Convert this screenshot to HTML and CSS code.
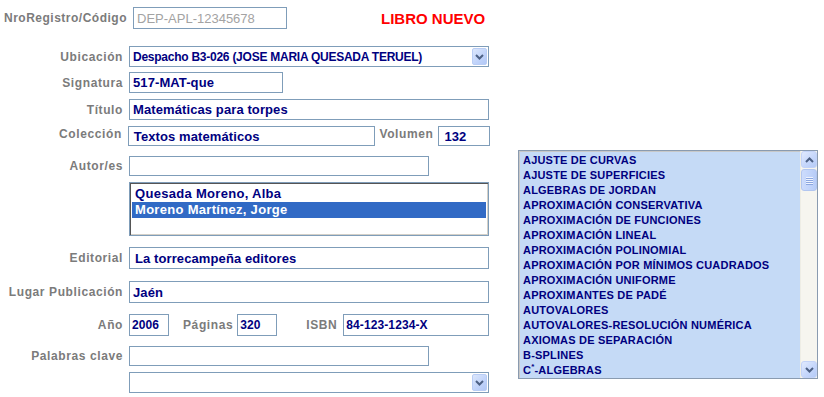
FILE: index.html
```html
<!DOCTYPE html>
<html lang="es">
<head>
<meta charset="utf-8">
<link rel="stylesheet" href="styles.css">
</head>
<body>
<div class="page">
  <div class="form">
    <div class="row-top">
      <span class="lbl-top">NroRegistro/Código</span>
      <div class="field code">DEP-APL-12345678</div>
      <span class="nuevo">LIBRO NUEVO</span>
    </div>

    <div class="row r-ubic">
      <span class="lbl">Ubicación</span>
      <div class="select w-full">
        <span class="sel-text">Despacho B3-026 (JOSE MARIA QUESADA TERUEL)</span>
        <span class="sel-btn"><svg width="9" height="6" viewBox="0 0 9 6"><path d="M1 1 L4.5 4.5 L8 1" fill="none" stroke="#4d6185" stroke-width="2"/></svg></span>
      </div>
    </div>

    <div class="row r-sig">
      <span class="lbl">Signatura</span>
      <div class="field w-sig">517-MAT-que</div>
    </div>

    <div class="row r-tit">
      <span class="lbl">Título</span>
      <div class="field w-full">Matemáticas para torpes</div>
    </div>

    <div class="row r-col">
      <span class="lbl lbl-up">Colección</span>
      <div class="field w-col pad-col">Textos matemáticos</div>
      <span class="lbl-in lbl-up">Volumen</span>
      <div class="field w-vol pad-col">132</div>
    </div>

    <div class="row r-aut">
      <span class="lbl">Autor/es</span>
      <div class="field w-mid"></div>
    </div>

    <div class="row r-list">
      <span class="lbl"></span>
      <div class="listbox">
        <div class="opt">Quesada Moreno, Alba</div>
        <div class="opt selected">Moreno Martínez, Jorge</div>
      </div>
    </div>

    <div class="row r-edit">
      <span class="lbl">Editorial</span>
      <div class="field w-full pad-col">La torrecampeña editores</div>
    </div>

    <div class="row r-lugar">
      <span class="lbl">Lugar Publicación</span>
      <div class="field w-full">Jaén</div>
    </div>

    <div class="row r-anio">
      <span class="lbl">Año</span>
      <div class="field w-anio num">2006</div>
      <span class="lbl-in pag">Páginas</span>
      <div class="field w-pag num">320</div>
      <span class="lbl-in isbn">ISBN</span>
      <div class="field w-isbn num">84-123-1234-X</div>
    </div>

    <div class="row r-pal">
      <span class="lbl">Palabras clave</span>
      <div class="field w-mid"></div>
    </div>

    <div class="row r-sel2">
      <span class="lbl"></span>
      <div class="select w-full">
        <span class="sel-text"></span>
        <span class="sel-btn"><svg width="9" height="6" viewBox="0 0 9 6"><path d="M1 1 L4.5 4.5 L8 1" fill="none" stroke="#4d6185" stroke-width="2"/></svg></span>
      </div>
    </div>
  </div>

  <div class="topics">
    <div class="topics-items">
      <div>AJUSTE DE CURVAS</div>
      <div>AJUSTE DE SUPERFICIES</div>
      <div>ALGEBRAS DE JORDAN</div>
      <div>APROXIMACIÓN CONSERVATIVA</div>
      <div>APROXIMACIÓN DE FUNCIONES</div>
      <div>APROXIMACIÓN LINEAL</div>
      <div>APROXIMACIÓN POLINOMIAL</div>
      <div>APROXIMACIÓN POR MÍNIMOS CUADRADOS</div>
      <div>APROXIMACIÓN UNIFORME</div>
      <div>APROXIMANTES DE PADÉ</div>
      <div>AUTOVALORES</div>
      <div>AUTOVALORES-RESOLUCIÓN NUMÉRICA</div>
      <div>AXIOMAS DE SEPARACIÓN</div>
      <div>B-SPLINES</div>
      <div>C<sup class="ast">*</sup>-ALGEBRAS</div>
    </div>
    <div class="scrollbar">
      <div class="sb-btn"><svg width="9" height="6" viewBox="0 0 9 6"><path d="M1 5 L4.5 1.5 L8 5" fill="none" stroke="#4d6185" stroke-width="2"/></svg></div>
      <div class="sb-thumb"><span></span><span></span><span></span><span></span></div>
      <div class="sb-track"></div>
      <div class="sb-btn"><svg width="9" height="6" viewBox="0 0 9 6"><path d="M1 1 L4.5 4.5 L8 1" fill="none" stroke="#4d6185" stroke-width="2"/></svg></div>
    </div>
  </div>
</div>
</body>
</html>
```

FILE: styles.css
```css
* { box-sizing: border-box; }

body {
  margin: 0;
  background: #ffffff;
  font-family: "Liberation Sans", Arial, sans-serif;
}

.page {
  display: flex;
  align-items: flex-start;
}

.form {
  width: 490px;
  display: flex;
  flex-direction: column;
}

.row-top {
  display: flex;
  align-items: center;
  margin-top: 7px;
  padding-left: 4px;
  height: 22px;
}

.lbl-top {
  font-size: 12px;
  font-weight: bold;
  color: #7b7b7b;
  letter-spacing: 0.5px;
  width: 125px;
  white-space: nowrap;
}

.field.code {
  margin-left: 4px;
  width: 154px;
  height: 22px;
  color: #a3a3a3;
  font-weight: normal;
  font-size: 13px;
  letter-spacing: 0;
}

.nuevo {
  margin-left: 94px;
  color: #ff0000;
  font-weight: bold;
  font-size: 15px;
}

.row {
  display: flex;
  align-items: center;
}

.lbl {
  width: 123px;
  margin-right: 6px;
  text-align: right;
  font-size: 12px;
  font-weight: bold;
  color: #7b7b7b;
  letter-spacing: 0.6px;
  white-space: nowrap;
}

.lbl-up { position: relative; top: -2px; }

.lbl-in {
  font-size: 12px;
  font-weight: bold;
  color: #7b7b7b;
  letter-spacing: 0.6px;
  white-space: nowrap;
}

.field {
  border: 1px solid #7f9db9;
  background: #fff;
  color: #00007f;
  font-weight: bold;
  font-size: 13px;
  letter-spacing: 0.1px;
  padding-left: 3px;
  display: flex;
  align-items: center;
  height: 21px;
  white-space: nowrap;
  overflow: hidden;
}

.pad-col { padding-left: 5px; }

.w-full { width: 360px; }
.w-sig { width: 154px; }
.w-col { width: 250px; }
.w-vol { width: 52px; margin-left: 5px; }
.w-mid { width: 300px; }
.w-anio { width: 40px; }
.w-pag { width: 40px; margin-left: 4px; }
.w-isbn { width: 146px; margin-left: 6px; }
.pag { margin-left: 14px; }
.isbn { margin-left: 29px; }
.num { font-size: 12px; padding-left: 2px; }

.r-col .lbl-in { margin-left: 4px; }

.select {
  border: 1px solid #7f9db9;
  height: 21px;
  display: flex;
  align-items: center;
  padding: 1px;
  background: #fff;
}

.sel-text {
  flex: 1;
  color: #00007f;
  font-size: 12px;
  font-weight: bold;
  letter-spacing: -0.25px;
  padding-left: 2px;
  white-space: nowrap;
}

.sel-btn {
  width: 15px;
  height: 17px;
  border: 1px solid #b9cdf5;
  border-radius: 2px;
  background: linear-gradient(135deg, #dce7fc 0%, #c0d3fa 60%, #b2c8f6 100%);
  display: flex;
  align-items: center;
  justify-content: center;
}

.r-ubic { margin-top: 17px; }
.r-sig { margin-top: 5px; }
.r-tit { margin-top: 6px; }
.r-col { margin-top: 6px; }
.r-col .field { height: 20px; }
.r-aut { margin-top: 10px; }
.r-aut .field { height: 20px; }
.r-list { margin-top: 6px; align-items: flex-start; }
.r-edit { margin-top: 11px; }
.r-edit .field { height: 22px; }
.r-lugar { margin-top: 12px; }
.r-lugar .field { height: 22px; }
.r-anio { margin-top: 11px; }
.r-anio .field { height: 22px; }
.r-pal { margin-top: 10px; }
.r-pal .field { height: 20px; }
.r-sel2 { margin-top: 6px; }

.listbox {
  width: 360px;
  height: 54px;
  border: 1px solid #7f9db9;
  box-shadow: inset 1px 1px 0 #555, inset -1px -1px 0 #d4d0c8;
  padding: 3px 2px 2px 2px;
  background: #fff;
}

.opt {
  height: 16px;
  line-height: 16px;
  padding-left: 3px;
  font-size: 13px;
  font-weight: bold;
  letter-spacing: 0.3px;
  color: #00007f;
  white-space: nowrap;
}

.opt.selected {
  background: #316ac5;
  color: #ffffff;
}

.topics {
  margin-left: 28px;
  margin-top: 150px;
  width: 300px;
  height: 229px;
  border: 1px solid #8a9bb0;
  box-shadow: inset 1px 1px 0 #c8c8c8;
  background: #c5daf6;
  display: flex;
}

.topics-items {
  flex: 1;
  padding: 2px 0 0 4px;
  overflow: hidden;
}

.topics-items div {
  font-size: 11px;
  font-weight: bold;
  letter-spacing: 0.2px;
  line-height: 15px;
  height: 15px;
  color: #00007f;
  white-space: nowrap;
}

.ast {
  font-size: 8px;
  vertical-align: top;
  line-height: 8px;
}

.scrollbar {
  width: 17px;
  background: #f6f5ef;
  display: flex;
  flex-direction: column;
  border-left: 1px solid #eeede5;
}

.sb-btn {
  height: 17px;
  border: 1px solid #c3d3f8;
  border-radius: 3px;
  background: linear-gradient(135deg, #e1eafe 0%, #c6d7fb 55%, #b5cbf7 100%);
  display: flex;
  align-items: center;
  justify-content: center;
}

.sb-thumb {
  height: 22px;
  margin-top: 1px;
  border: 1px solid #b2c6f0;
  border-radius: 3px;
  background: linear-gradient(90deg, #cddcfc 0%, #c0d3fa 60%, #b7ccf7 100%);
  display: flex;
  flex-direction: column;
  align-items: center;
  justify-content: center;
  gap: 1px;
}

.sb-thumb span {
  width: 7px;
  height: 1px;
  background: #eef3fe;
  box-shadow: 0 1px 0 #8ca7e0;
}

.sb-track { flex: 1; }
```
